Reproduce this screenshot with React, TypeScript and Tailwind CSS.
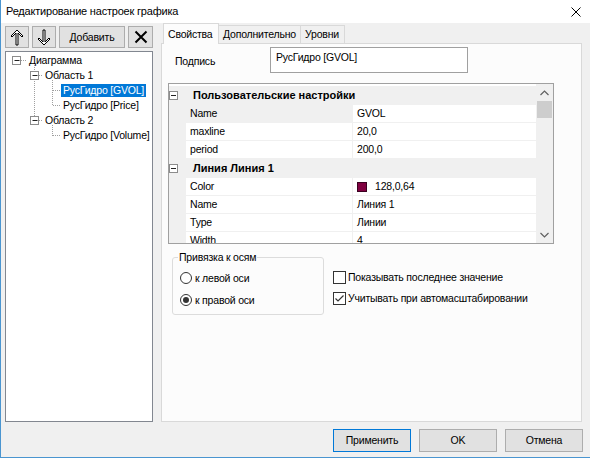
import React from "react";

const F = "[font-family:'Liberation_Sans',Arial,sans-serif]";

function UpArrow() {
  return (
    <svg width="14" height="17" viewBox="0 0 14 17">
      <path d="M7 1 L13 7 L12 8 L8 4 L8 16 L6 16 L6 4 L2 8 L1 7 Z" fill="#fff" stroke="#000" strokeWidth="1" strokeLinejoin="miter" />
    </svg>
  );
}

function DownArrow() {
  return (
    <svg width="14" height="17" viewBox="0 0 14 17">
      <path d="M7 16 L13 10 L12 9 L8 13 L8 1 L6 1 L6 13 L2 9 L1 10 Z" fill="#fff" stroke="#000" strokeWidth="1" strokeLinejoin="miter" />
    </svg>
  );
}

function XIcon() {
  return (
    <svg width="14" height="14" viewBox="0 0 14 14">
      <path d="M1.5 1.5 L12.5 12.5 M12.5 1.5 L1.5 12.5" stroke="#000" strokeWidth="2" />
    </svg>
  );
}

function MinusBox() {
  return (
    <span className="w-[9px] h-[9px] border border-[#8c8c8c] bg-white flex items-center justify-center shrink-0">
      <span className="w-[5px] h-[1px] bg-[#222]" />
    </span>
  );
}

function Chevron({ down }: { down?: boolean }) {
  return (
    <svg width="9" height="6" viewBox="0 0 9 6">
      <path d={down ? "M0.5 1 L4.5 5 L8.5 1" : "M0.5 5 L4.5 1 L8.5 5"} fill="none" stroke="#606060" strokeWidth="1.2" />
    </svg>
  );
}

const treeRows = [
  { t: "Диаграмма", pl: "pl-[21px]", sel: false },
  { t: "Область 1", pl: "pl-[37px]", sel: false },
  { t: "РусГидро [GVOL]", pl: "pl-[55px]", sel: true },
  { t: "РусГидро [Price]", pl: "pl-[55px]", sel: false },
  { t: "Область 2", pl: "pl-[37px]", sel: false },
  { t: "РусГидро [Volume]", pl: "pl-[55px]", sel: false },
];

function TreeLines() {
  const dot = { stroke: "#a0a0a0", strokeWidth: 1, strokeDasharray: "1 1" };
  const box = (cx: number, cy: number) => (
    <g key={`${cx}-${cy}`}>
      <rect x={cx - 3.5} y={cy - 4} width={8} height={8} fill="#fff" stroke="#8c8c8c" />
      <line x1={cx - 1.5} y1={cy} x2={cx + 3.5} y2={cy} stroke="#222" />
    </g>
  );
  return (
    <svg className="absolute left-0 top-0 pointer-events-none" width="146" height="120">
      <line x1={15} y1={8.5} x2={21} y2={8.5} {...dot} />
      <line x1={28.5} y1={13} x2={28.5} y2={64} {...dot} />
      <line x1={33} y1={23.5} x2={37} y2={23.5} {...dot} />
      <line x1={33} y1={68.5} x2={37} y2={68.5} {...dot} />
      <line x1={46.5} y1={28} x2={46.5} y2={54} {...dot} />
      <line x1={47} y1={38.5} x2={54} y2={38.5} {...dot} />
      <line x1={47} y1={53.5} x2={54} y2={53.5} {...dot} />
      <line x1={46.5} y1={73} x2={46.5} y2={84} {...dot} />
      <line x1={47} y1={83.5} x2={54} y2={83.5} {...dot} />
      {box(10, 8.5)}
      {box(28, 23.5)}
      {box(28, 68.5)}
    </svg>
  );
}

function Tree() {
  return (
    <div className="mt-[3px] h-[371px] border border-[#828790] bg-white relative pt-[1px]">
      <TreeLines />
      {treeRows.map((r, i) => (
        <div key={i} className={`h-[15px] flex items-center ${r.pl}`}>
          <span
            className={`px-[2px] h-[13px] leading-[13px] whitespace-nowrap ${
              r.sel ? "bg-[#0078d7] text-white" : ""
            }`}
          >
            {r.t}
          </span>
        </div>
      ))}
    </div>
  );
}

type Row =
  | { cat: string }
  | { name: string; value: string; sel?: boolean; color?: string };

const gridRows: Row[] = [
  { cat: "Пользовательские настройки" },
  { name: "Name", value: "GVOL", sel: true },
  { name: "maxline", value: "20,0" },
  { name: "period", value: "200,0" },
  { cat: "Линия Линия 1" },
  { name: "Color", value: "128,0,64", color: "#800040" },
  { name: "Name", value: "Линия 1" },
  { name: "Type", value: "Линии" },
  { name: "Width", value: "4" },
];

function PropertyGrid() {
  return (
    <div className="mt-[10px] ml-[6px] w-[386px] h-[161px] border border-[#a0a0a0] bg-white flex">
      <div className="flex-1 flex flex-col pt-[2px] overflow-hidden">
        {gridRows.map((r, i) =>
          "cat" in r ? (
            <div key={i} className="h-[19px] shrink-0 flex items-center bg-[#f0f0f0]">
              <MinusBox />
              <span className="ml-[15px] font-bold text-[11px] tracking-normal whitespace-nowrap">{r.cat}</span>
            </div>
          ) : (
            <div key={i} className="h-[18px] shrink-0 flex">
              <div className="w-[17px] shrink-0 bg-[#f0f0f0]" />
              <div
                className={`w-[167px] shrink-0 border-b border-r border-[#f0f0f0] pl-[4px] flex items-center ${
                  r.sel ? "bg-[#f0f0f0]" : ""
                }`}
              >
                {r.name}
              </div>
              <div className="flex-1 border-b border-[#f0f0f0] pl-[4px] flex items-center">
                {r.color ? (
                  <>
                    <span className="w-[10px] h-[10px] bg-[#800040] border border-[#3a0020] shrink-0" />
                    <span className="ml-[8px]">{r.value}</span>
                  </>
                ) : (
                  r.value
                )}
              </div>
            </div>
          )
        )}
      </div>
      <div className="w-[17px] shrink-0 bg-[#f0f0f0] flex flex-col">
        <div className="h-[17px] flex items-center justify-center">
          <Chevron />
        </div>
        <div className="h-[17px] mx-[1px] bg-[#cdcdcd]" />
        <div className="flex-1" />
        <div className="h-[17px] flex items-center justify-center">
          <Chevron down />
        </div>
      </div>
    </div>
  );
}

function Radio({ label, checked }: { label: string; checked?: boolean }) {
  return (
    <div className="h-[22px] flex items-center">
      <span className="w-[12px] h-[12px] rounded-full border border-[#333] bg-white flex items-center justify-center shrink-0">
        {checked && <span className="w-[6px] h-[6px] rounded-full bg-[#333]" />}
      </span>
      <span className="ml-[3px]">{label}</span>
    </div>
  );
}

function Check({ label, checked }: { label: string; checked?: boolean }) {
  return (
    <div className="h-[21px] flex items-center">
      <span className="w-[13px] h-[13px] border border-[#333] bg-white flex items-center justify-center shrink-0">
        {checked && (
          <svg width="11" height="11" viewBox="0 0 11 11">
            <path d="M1.5 5.5 L4 8 L9.5 2.5" fill="none" stroke="#333" strokeWidth="1.2" />
          </svg>
        )}
      </span>
      <span className="ml-[2px] whitespace-nowrap">{label}</span>
    </div>
  );
}

function ToolBtn({ w, children }: { w: string; children: React.ReactNode }) {
  return (
    <div className={`${w} h-[22px] bg-[#e1e1e1] border border-[#adadad] flex items-center justify-center`}>
      {children}
    </div>
  );
}

export default function App() {
  return (
    <div
      className={`w-[590px] h-[458px] bg-[#f0f0f0] border-l border-b border-[#4a95d0] flex flex-col text-[10.5px] tracking-[-0.2px] leading-[13px] text-black overflow-hidden ${F}`}
    >
      <div className="h-[23px] shrink-0 bg-white flex items-center pl-[5px] pr-[9px]">
        <span className="text-[11px] tracking-[-0.2px] flex-1">Редактирование настроек графика</span>
        <svg width="10" height="10" viewBox="0 0 10 10">
          <path d="M0.5 0.5 L9.5 9.5 M9.5 0.5 L0.5 9.5" stroke="#000" strokeWidth="1" />
        </svg>
      </div>

      <div className="flex h-[399px] shrink-0">
        <div className="ml-[4px] w-[148px] flex flex-col">
          <div className="mt-[3px] h-[22px] flex gap-[3px]">
            <ToolBtn w="w-[24px]">
              <UpArrow />
            </ToolBtn>
            <ToolBtn w="w-[24px]">
              <DownArrow />
            </ToolBtn>
            <ToolBtn w="w-[66px]">Добавить</ToolBtn>
            <ToolBtn w="w-[25px]">
              <XIcon />
            </ToolBtn>
          </div>
          <Tree />
        </div>

        <div className="ml-[8px] w-[421px] flex flex-col">
          <div className="h-[20px] shrink-0 flex items-end pl-[2px]">
            <div className="relative z-10 h-[21px] -mb-[1px] w-[56px] bg-[#fcfcfc] border border-b-0 border-[#d9d9d9] pl-[4px] flex items-center">
              Свойства
            </div>
            <div className="h-[18px] w-[82px] bg-[#f0f0f0] border-t border-r border-[#d9d9d9] pl-[4px] flex items-center whitespace-nowrap">
              Дополнительно
            </div>
            <div className="h-[18px] w-[44px] bg-[#f0f0f0] border-t border-r border-[#d9d9d9] pl-[4px] flex items-center">
              Уровни
            </div>
          </div>
          <div className="flex-1 border border-[#d9d9d9] bg-[#fcfcfc] flex flex-col">
            <div className="pt-[3px] flex">
              <div className="ml-[13px] w-[95px] mt-[8px]">Подпись</div>
              <div className="w-[198px] h-[26px] border border-[#a0a0a0] bg-white pl-[5px] pt-[3px]">
                РусГидро [GVOL]
              </div>
            </div>
            <PropertyGrid />
            <div className="mt-[7px] ml-[10px] flex items-start">
              <fieldset className="w-[152px] border border-[#dcdcdc] rounded-[3px] p-0 m-0">
                <legend className="ml-[5px] px-[1px] leading-[13px]">Привязка к осям</legend>
                <div className="pl-[7px] pt-[3px] pb-[3px]">
                  <Radio label="к левой оси" />
                  <Radio label="к правой оси" checked />
                </div>
              </fieldset>
              <div className="ml-[9px] pt-[16px]">
                <Check label="Показывать последнее значение" />
                <Check label="Учитывать при автомасштабировании" checked />
              </div>
            </div>
          </div>
        </div>
      </div>

      <div className="mt-[7px] h-[23px] shrink-0 flex justify-end gap-[8px] pr-[7px]">
        <div className="w-[78px] h-[23px] border border-[#0078d7] bg-[#e1e1e1] flex items-center justify-center">
          Применить
        </div>
        <div className="w-[78px] h-[23px] border border-[#adadad] bg-[#e1e1e1] flex items-center justify-center">
          OK
        </div>
        <div className="w-[78px] h-[23px] border border-[#adadad] bg-[#e1e1e1] flex items-center justify-center">
          Отмена
        </div>
      </div>
    </div>
  );
}
